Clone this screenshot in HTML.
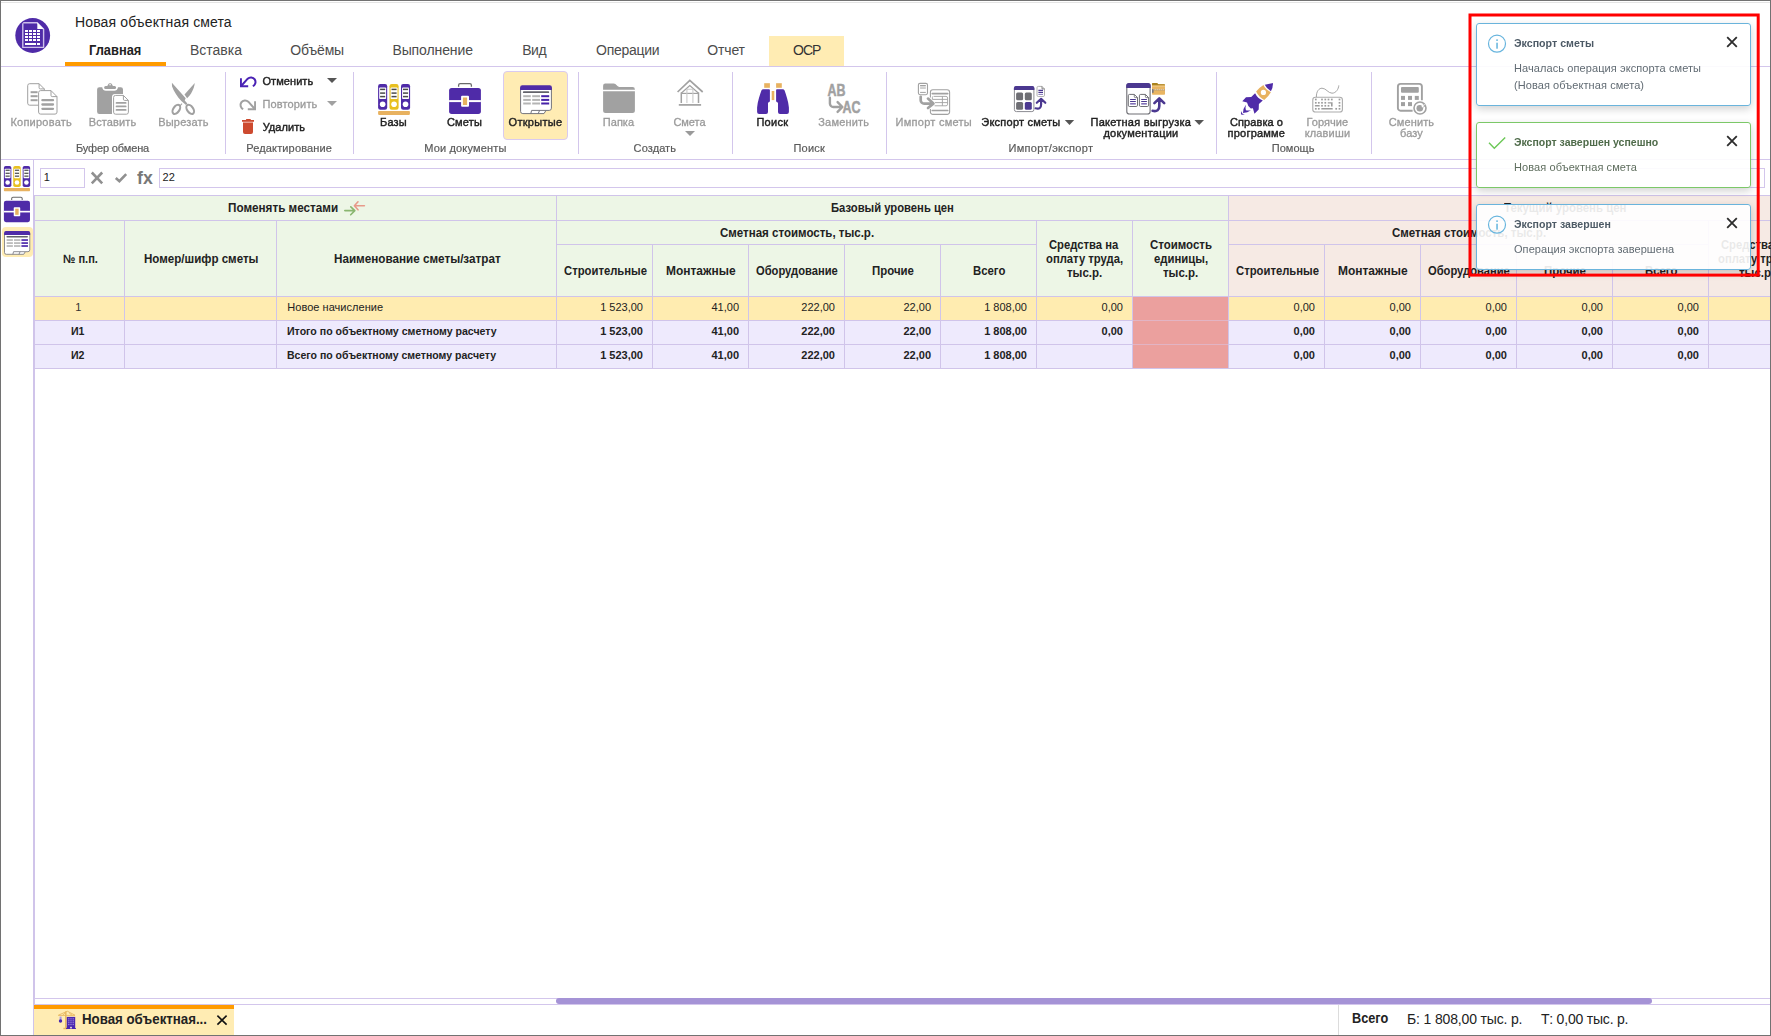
<!DOCTYPE html>
<html lang="ru"><head><meta charset="utf-8"><title>Новая объектная смета</title>
<style>
html,body{margin:0;padding:0;background:#fff;}
body{width:1771px;height:1036px;position:relative;overflow:hidden;font-family:'Liberation Sans', sans-serif;}
.b{position:absolute;}
.t{position:absolute;white-space:pre;line-height:1;}
svg{position:absolute;overflow:visible;}
#toasts,#rib{position:absolute;left:0;top:0;width:1771px;height:1036px;will-change:transform;}
</style></head>
<body>
<div id="main">
<div class="b" style="left:0px;top:0px;width:1771px;height:1px;background:#727272;"></div>
<div class="b" style="left:0px;top:0px;width:1px;height:1036px;background:#727272;"></div>
<div class="b" style="left:1770px;top:0px;width:1px;height:1036px;background:#727272;"></div>
<div class="b" style="left:0px;top:1035px;width:1771px;height:1px;background:#727272;"></div>
<div class="b" style="left:1px;top:2px;width:1769px;height:1px;background:#e4e4e4;"></div>
<div class="b" style="left:65px;top:62px;width:101px;height:4px;background:#ff9b00;"></div>
<div class="b" style="left:769px;top:36px;width:75px;height:30px;background:#ffecb3;"></div>
<div class="b" style="left:1px;top:66px;width:1769px;height:1px;background:#d3c6ec;"></div>
<div class="b" style="left:1px;top:159px;width:1769px;height:1px;background:#d3c6ec;"></div>
<div class="b" style="left:225px;top:72px;width:1px;height:82px;background:#d3c6ec;"></div>
<div class="b" style="left:353px;top:72px;width:1px;height:82px;background:#d3c6ec;"></div>
<div class="b" style="left:578px;top:72px;width:1px;height:82px;background:#d3c6ec;"></div>
<div class="b" style="left:732px;top:72px;width:1px;height:82px;background:#d3c6ec;"></div>
<div class="b" style="left:886px;top:72px;width:1px;height:82px;background:#d3c6ec;"></div>
<div class="b" style="left:1216px;top:72px;width:1px;height:82px;background:#d3c6ec;"></div>
<div class="b" style="left:1371px;top:72px;width:1px;height:82px;background:#d3c6ec;"></div>
<div class="b" style="left:503px;top:71px;width:63px;height:67px;background:#ffecb3;border:1px solid #d9caf0;border-radius:4px;"></div>
<div class="b" style="left:40px;top:168px;width:45px;height:20px;background:#fff;border:1px solid #d3c6ec;box-sizing:border-box;"></div>
<div class="b" style="left:159px;top:168px;width:1606px;height:20px;background:#fff;border:1px solid #d3c6ec;box-sizing:border-box;"></div>
<div class="b" style="left:2px;top:227px;width:30.5px;height:30px;background:#ffecb3;border-radius:4px;"></div>
<div class="b" style="left:34px;top:195px;width:1195px;height:102px;background:#edf6e6;"></div>
<div class="b" style="left:1229px;top:195px;width:541px;height:102px;background:#f6eae4;"></div>
<div class="b" style="left:34px;top:297px;width:1736px;height:23px;background:#ffecb0;"></div>
<div class="b" style="left:34px;top:321px;width:1736px;height:47px;background:#eeeafd;"></div>
<div class="b" style="left:1133px;top:297px;width:95px;height:71px;background:#eba09e;"></div>
<div class="b" style="left:34px;top:195px;width:1736px;height:1px;background:#d0c4ea;"></div>
<div class="b" style="left:34px;top:220px;width:1736px;height:1px;background:#d0c4ea;"></div>
<div class="b" style="left:556px;top:244px;width:480px;height:1px;background:#d0c4ea;"></div>
<div class="b" style="left:1228px;top:244px;width:480px;height:1px;background:#d0c4ea;"></div>
<div class="b" style="left:34px;top:296px;width:1736px;height:1px;background:#d0c4ea;"></div>
<div class="b" style="left:34px;top:320px;width:1736px;height:1px;background:#d0c4ea;"></div>
<div class="b" style="left:34px;top:344px;width:1736px;height:1px;background:#d0c4ea;"></div>
<div class="b" style="left:34px;top:368px;width:1736px;height:1px;background:#d0c4ea;"></div>
<div class="b" style="left:33px;top:160px;width:1px;height:875px;background:#d0c4ea;"></div>
<div class="b" style="left:34px;top:195px;width:1px;height:840px;background:#d0c4ea;"></div>
<div class="b" style="left:124px;top:220px;width:1px;height:149px;background:#d0c4ea;"></div>
<div class="b" style="left:276px;top:220px;width:1px;height:149px;background:#d0c4ea;"></div>
<div class="b" style="left:556px;top:195px;width:1px;height:174px;background:#d0c4ea;"></div>
<div class="b" style="left:1228px;top:195px;width:1px;height:174px;background:#d0c4ea;"></div>
<div class="b" style="left:652px;top:244px;width:1px;height:125px;background:#d0c4ea;"></div>
<div class="b" style="left:748px;top:244px;width:1px;height:125px;background:#d0c4ea;"></div>
<div class="b" style="left:844px;top:244px;width:1px;height:125px;background:#d0c4ea;"></div>
<div class="b" style="left:940px;top:244px;width:1px;height:125px;background:#d0c4ea;"></div>
<div class="b" style="left:1324px;top:244px;width:1px;height:125px;background:#d0c4ea;"></div>
<div class="b" style="left:1420px;top:244px;width:1px;height:125px;background:#d0c4ea;"></div>
<div class="b" style="left:1516px;top:244px;width:1px;height:125px;background:#d0c4ea;"></div>
<div class="b" style="left:1612px;top:244px;width:1px;height:125px;background:#d0c4ea;"></div>
<div class="b" style="left:1036px;top:220px;width:1px;height:149px;background:#d0c4ea;"></div>
<div class="b" style="left:1132px;top:220px;width:1px;height:149px;background:#d0c4ea;"></div>
<div class="b" style="left:1708px;top:220px;width:1px;height:149px;background:#d0c4ea;"></div>
<div class="b" style="left:1133px;top:320px;width:95px;height:1px;background:#e2b4c4;"></div>
<div class="b" style="left:1133px;top:344px;width:95px;height:1px;background:#e2b4c4;"></div>
<div class="b" style="left:34px;top:998px;width:1736px;height:1px;background:#d3c6ec;"></div>
<div class="b" style="left:34px;top:1004px;width:1736px;height:1px;background:#d3c6ec;"></div>
<div class="b" style="left:556px;top:998px;width:1096px;height:6px;background:#a593d6;border-radius:3px;"></div>
<div class="b" style="left:34px;top:1005px;width:200px;height:4px;background:#ff9b00;"></div>
<div class="b" style="left:34px;top:1009px;width:200px;height:26px;background:#ffecb3;"></div>
<div class="b" style="left:1338px;top:1005px;width:1px;height:30px;background:#dcdcdc;"></div>
<span class="t" style="left:75.00px;top:15.15px;font-size:14px;font-weight:400;color:#222;letter-spacing:0.134px;">Новая объектная смета</span>
<span class="t" style="left:89.20px;top:43.15px;font-size:14px;font-weight:700;color:#222;transform:scaleX(0.9186);transform-origin:0 0;">Главная</span>
<span class="t" style="left:190.00px;top:43.15px;font-size:14px;font-weight:400;color:#4c4c4c;letter-spacing:-0.007px;">Вставка</span>
<span class="t" style="left:290.30px;top:43.15px;font-size:14px;font-weight:400;color:#4c4c4c;letter-spacing:-0.162px;">Объёмы</span>
<span class="t" style="left:392.40px;top:43.15px;font-size:14px;font-weight:400;color:#4c4c4c;letter-spacing:-0.098px;">Выполнение</span>
<span class="t" style="left:522.20px;top:43.15px;font-size:14px;font-weight:400;color:#4c4c4c;letter-spacing:-0.409px;">Вид</span>
<span class="t" style="left:596.00px;top:43.15px;font-size:14px;font-weight:400;color:#4c4c4c;letter-spacing:-0.263px;">Операции</span>
<span class="t" style="left:707.30px;top:43.15px;font-size:14px;font-weight:400;color:#4c4c4c;letter-spacing:-0.169px;">Отчет</span>
<span class="t" style="left:793.00px;top:43.15px;font-size:14px;font-weight:400;color:#333;letter-spacing:-0.981px;">ОСР</span>
<span class="t" style="left:43.70px;top:171.69px;font-size:11px;font-weight:400;color:#222;">1</span>
<span class="t" style="left:137.10px;top:168.76px;font-size:18px;font-weight:700;color:#787878;transform:scaleX(0.9865);transform-origin:0 0;">fx</span>
<span class="t" style="left:162.60px;top:171.69px;font-size:11px;font-weight:400;color:#222;">22</span>
<span class="t" style="left:227.60px;top:201.84px;font-size:12px;font-weight:700;color:#222;transform:scaleX(0.9738);transform-origin:0 0;">Поменять местами</span>
<span class="t" style="left:62.70px;top:252.84px;font-size:12px;font-weight:700;color:#222;transform:scaleX(0.9215);transform-origin:0 0;">№ п.п.</span>
<span class="t" style="left:143.60px;top:252.84px;font-size:12px;font-weight:700;color:#222;transform:scaleX(0.9638);transform-origin:0 0;">Номер/шифр сметы</span>
<span class="t" style="left:333.70px;top:252.84px;font-size:12px;font-weight:700;color:#222;transform:scaleX(0.9735);transform-origin:0 0;">Наименование сметы/затрат</span>
<span class="t" style="left:831.40px;top:201.84px;font-size:12px;font-weight:700;color:#222;transform:scaleX(0.9374);transform-origin:0 0;">Базовый уровень цен</span>
<span class="t" style="left:720.00px;top:226.84px;font-size:12px;font-weight:700;color:#222;transform:scaleX(0.9597);transform-origin:0 0;">Сметная стоимость, тыс.р.</span>
<span class="t" style="left:563.80px;top:264.84px;font-size:12px;font-weight:700;color:#222;transform:scaleX(0.9398);transform-origin:0 0;">Строительные</span>
<span class="t" style="left:1235.80px;top:264.84px;font-size:12px;font-weight:700;color:#222;transform:scaleX(0.9398);transform-origin:0 0;">Строительные</span>
<span class="t" style="left:666.20px;top:264.84px;font-size:12px;font-weight:700;color:#222;transform:scaleX(0.9970);transform-origin:0 0;">Монтажные</span>
<span class="t" style="left:1338.20px;top:264.84px;font-size:12px;font-weight:700;color:#222;transform:scaleX(0.9970);transform-origin:0 0;">Монтажные</span>
<span class="t" style="left:755.90px;top:264.84px;font-size:12px;font-weight:700;color:#222;transform:scaleX(0.9320);transform-origin:0 0;">Оборудование</span>
<span class="t" style="left:1427.90px;top:264.84px;font-size:12px;font-weight:700;color:#222;transform:scaleX(0.9320);transform-origin:0 0;">Оборудование</span>
<span class="t" style="left:872.10px;top:264.84px;font-size:12px;font-weight:700;color:#222;transform:scaleX(0.9519);transform-origin:0 0;">Прочие</span>
<span class="t" style="left:1544.10px;top:264.84px;font-size:12px;font-weight:700;color:#222;transform:scaleX(0.9519);transform-origin:0 0;">Прочие</span>
<span class="t" style="left:972.90px;top:264.84px;font-size:12px;font-weight:700;color:#222;transform:scaleX(0.9477);transform-origin:0 0;">Всего</span>
<span class="t" style="left:1644.90px;top:264.84px;font-size:12px;font-weight:700;color:#222;transform:scaleX(0.9477);transform-origin:0 0;">Всего</span>
<span class="t" style="left:1049.20px;top:239.34px;font-size:12px;font-weight:700;color:#222;transform:scaleX(0.9373);transform-origin:0 0;">Средства на</span>
<span class="t" style="left:1046.00px;top:253.34px;font-size:12px;font-weight:700;color:#222;transform:scaleX(0.9390);transform-origin:0 0;">оплату труда,</span>
<span class="t" style="left:1067.00px;top:267.34px;font-size:12px;font-weight:700;color:#222;transform:scaleX(0.9566);transform-origin:0 0;">тыс.р.</span>
<span class="t" style="left:1150.00px;top:239.34px;font-size:12px;font-weight:700;color:#222;transform:scaleX(0.9550);transform-origin:0 0;">Стоимость</span>
<span class="t" style="left:1154.00px;top:253.34px;font-size:12px;font-weight:700;color:#222;transform:scaleX(0.9447);transform-origin:0 0;">единицы,</span>
<span class="t" style="left:1163.00px;top:267.34px;font-size:12px;font-weight:700;color:#222;transform:scaleX(0.9566);transform-origin:0 0;">тыс.р.</span>
<span class="t" style="left:1503.70px;top:201.84px;font-size:12px;font-weight:700;color:#222;transform:scaleX(0.9524);transform-origin:0 0;">Текущий уровень цен</span>
<span class="t" style="left:1392.00px;top:226.84px;font-size:12px;font-weight:700;color:#222;transform:scaleX(0.9597);transform-origin:0 0;">Сметная стоимость, тыс.р.</span>
<span class="t" style="left:1721.20px;top:239.34px;font-size:12px;font-weight:700;color:#222;transform:scaleX(0.9373);transform-origin:0 0;">Средства на</span>
<span class="t" style="left:1718.00px;top:253.34px;font-size:12px;font-weight:700;color:#222;transform:scaleX(0.9390);transform-origin:0 0;">оплату труда,</span>
<span class="t" style="left:1739.00px;top:267.34px;font-size:12px;font-weight:700;color:#222;transform:scaleX(0.9566);transform-origin:0 0;">тыс.р.</span>
<span class="t" style="left:75.20px;top:301.69px;font-size:11px;font-weight:400;color:#333;">1</span>
<span class="t" style="left:287.30px;top:301.69px;font-size:11px;font-weight:400;color:#222;letter-spacing:0.032px;">Новое начисление</span>
<span class="t" style="left:70.50px;top:325.69px;font-size:11px;font-weight:700;color:#222;transform:scaleX(0.9621);transform-origin:0 0;">И1</span>
<span class="t" style="left:70.50px;top:349.69px;font-size:11px;font-weight:700;color:#222;transform:scaleX(0.9621);transform-origin:0 0;">И2</span>
<span class="t" style="left:287.30px;top:325.69px;font-size:11px;font-weight:700;color:#222;transform:scaleX(0.9615);transform-origin:0 0;">Итого по объектному сметному расчету</span>
<span class="t" style="left:287.30px;top:349.69px;font-size:11px;font-weight:700;color:#222;transform:scaleX(0.9569);transform-origin:0 0;">Всего по объектному сметному расчету</span>
<span class="t" style="left:600.17px;top:301.69px;font-size:11px;font-weight:400;color:#222;">1 523,00</span>
<span class="t" style="left:600.17px;top:325.69px;font-size:11px;font-weight:700;color:#222;">1 523,00</span>
<span class="t" style="left:600.17px;top:349.69px;font-size:11px;font-weight:700;color:#222;">1 523,00</span>
<span class="t" style="left:711.47px;top:301.69px;font-size:11px;font-weight:400;color:#222;">41,00</span>
<span class="t" style="left:711.47px;top:325.69px;font-size:11px;font-weight:700;color:#222;">41,00</span>
<span class="t" style="left:711.47px;top:349.69px;font-size:11px;font-weight:700;color:#222;">41,00</span>
<span class="t" style="left:801.34px;top:301.69px;font-size:11px;font-weight:400;color:#222;">222,00</span>
<span class="t" style="left:801.34px;top:325.69px;font-size:11px;font-weight:700;color:#222;">222,00</span>
<span class="t" style="left:801.34px;top:349.69px;font-size:11px;font-weight:700;color:#222;">222,00</span>
<span class="t" style="left:903.47px;top:301.69px;font-size:11px;font-weight:400;color:#222;">22,00</span>
<span class="t" style="left:903.47px;top:325.69px;font-size:11px;font-weight:700;color:#222;">22,00</span>
<span class="t" style="left:903.47px;top:349.69px;font-size:11px;font-weight:700;color:#222;">22,00</span>
<span class="t" style="left:984.17px;top:301.69px;font-size:11px;font-weight:400;color:#222;">1 808,00</span>
<span class="t" style="left:984.17px;top:325.69px;font-size:11px;font-weight:700;color:#222;">1 808,00</span>
<span class="t" style="left:984.17px;top:349.69px;font-size:11px;font-weight:700;color:#222;">1 808,00</span>
<span class="t" style="left:1101.58px;top:301.69px;font-size:11px;font-weight:400;color:#222;">0,00</span>
<span class="t" style="left:1101.58px;top:325.69px;font-size:11px;font-weight:700;color:#222;">0,00</span>
<span class="t" style="left:1293.58px;top:301.69px;font-size:11px;font-weight:400;color:#222;">0,00</span>
<span class="t" style="left:1293.58px;top:325.69px;font-size:11px;font-weight:700;color:#222;">0,00</span>
<span class="t" style="left:1293.58px;top:349.69px;font-size:11px;font-weight:700;color:#222;">0,00</span>
<span class="t" style="left:1389.58px;top:301.69px;font-size:11px;font-weight:400;color:#222;">0,00</span>
<span class="t" style="left:1389.58px;top:325.69px;font-size:11px;font-weight:700;color:#222;">0,00</span>
<span class="t" style="left:1389.58px;top:349.69px;font-size:11px;font-weight:700;color:#222;">0,00</span>
<span class="t" style="left:1485.58px;top:301.69px;font-size:11px;font-weight:400;color:#222;">0,00</span>
<span class="t" style="left:1485.58px;top:325.69px;font-size:11px;font-weight:700;color:#222;">0,00</span>
<span class="t" style="left:1485.58px;top:349.69px;font-size:11px;font-weight:700;color:#222;">0,00</span>
<span class="t" style="left:1581.58px;top:301.69px;font-size:11px;font-weight:400;color:#222;">0,00</span>
<span class="t" style="left:1581.58px;top:325.69px;font-size:11px;font-weight:700;color:#222;">0,00</span>
<span class="t" style="left:1581.58px;top:349.69px;font-size:11px;font-weight:700;color:#222;">0,00</span>
<span class="t" style="left:1677.58px;top:301.69px;font-size:11px;font-weight:400;color:#222;">0,00</span>
<span class="t" style="left:1677.58px;top:325.69px;font-size:11px;font-weight:700;color:#222;">0,00</span>
<span class="t" style="left:1677.58px;top:349.69px;font-size:11px;font-weight:700;color:#222;">0,00</span>
<span class="t" style="left:82.30px;top:1012.15px;font-size:14px;font-weight:700;color:#222;transform:scaleX(0.9478);transform-origin:0 0;">Новая объектная...</span>
<span class="t" style="left:1351.60px;top:1011.15px;font-size:14px;font-weight:700;color:#222;transform:scaleX(0.9075);transform-origin:0 0;">Всего</span>
<span class="t" style="left:1407.10px;top:1011.65px;font-size:14px;font-weight:400;color:#222;letter-spacing:-0.163px;">Б: 1 808,00 тыс. р.</span>
<span class="t" style="left:1540.90px;top:1011.65px;font-size:14px;font-weight:400;color:#222;letter-spacing:-0.200px;">Т: 0,00 тыс. р.</span>
<svg width="1771" height="1036" viewBox="0 0 1771 1036" style="left:0;top:0"><g>
<circle cx="32.7" cy="35.5" r="17.4" fill="#4f2ba8"/>
<path d="M23.2,22.8 H37.2 L43.6,29.2 V47.4 H22.8 V23.2" fill="none" stroke="#cdbfea" stroke-width="1.4" stroke-linejoin="round"/>
<path d="M37.3,22.6 V29 H43.7 Z" fill="#fff"/>
<g fill="#fff"><rect x="25" y="30" width="3" height="2"/><rect x="29" y="30" width="3" height="2"/><rect x="33" y="30" width="3" height="2"/><rect x="37" y="30" width="3" height="2"/><rect x="25" y="33" width="3" height="2"/><rect x="29" y="33" width="3" height="2"/><rect x="33" y="33" width="3" height="2"/><rect x="37" y="33" width="3" height="2"/><rect x="25" y="36" width="3" height="2"/><rect x="29" y="36" width="3" height="2"/><rect x="33" y="36" width="3" height="2"/><rect x="37" y="36" width="3" height="2"/><rect x="25" y="39" width="3" height="2"/><rect x="29" y="39" width="3" height="2"/><rect x="33" y="39" width="3" height="2"/><rect x="37" y="39" width="3" height="2"/><rect x="25" y="43" width="11" height="2"/><rect x="37" y="43" width="3" height="2"/></g></g>
<g><path d="M29.7,83.7 H39.099999999999994 L44.3,88.9 V103.2 a2,2 0 0 1 -2,2 H29.7 a2,2 0 0 1 -2,-2 V85.7 a2,2 0 0 1 2,-2 Z" fill="#fff" stroke="#a1a1a1" stroke-width="1"/><path d="M39.099999999999994,83.7 V87.7 a1.2,1.2 0 0 0 1.2,1.2 H44.3" fill="none" stroke="#a1a1a1" stroke-width="1"/><line x1="30.6" x2="37.6" y1="92.2" y2="92.2" stroke="#a1a1a1" stroke-width="2"/><line x1="30.6" x2="37.6" y1="96.2" y2="96.2" stroke="#a1a1a1" stroke-width="2"/><line x1="30.6" x2="37.6" y1="100.2" y2="100.2" stroke="#a1a1a1" stroke-width="2"/><path d="M40.6,90.6 H51 L57,96.6 V112.1 a2,2 0 0 1 -2,2 H40.6 a2,2 0 0 1 -2,-2 V92.6 a2,2 0 0 1 2,-2 Z" fill="#fff" stroke="#a1a1a1" stroke-width="1"/><path d="M51,90.6 V95.39999999999999 a1.2,1.2 0 0 0 1.2,1.2 H57" fill="none" stroke="#a1a1a1" stroke-width="1"/><line x1="42.4" x2="53" y1="100.2" y2="100.2" stroke="#a1a1a1" stroke-width="2.3" stroke-linecap="round"/><line x1="42.4" x2="53" y1="104.5" y2="104.5" stroke="#a1a1a1" stroke-width="2.3" stroke-linecap="round"/><line x1="42.4" x2="53" y1="108.8" y2="108.8" stroke="#a1a1a1" stroke-width="2.3" stroke-linecap="round"/></g>
<g>
<path d="M99.3,87.2 H102.2 C102.6,89.6 104,90.7 106,90.7 H114.2 C116.2,90.7 117.6,89.6 118,87.2 H120.8 a2.2,2.2 0 0 1 2.2,2.2 V94 H115 a3,3 0 0 0 -3,3 V113.9 H99.3 a2.2,2.2 0 0 1 -2.2,-2.2 V89.4 a2.2,2.2 0 0 1 2.2,-2.2 Z" fill="#a1a1a1"/>
<path d="M105.6,86 H107.3 L108.4,83.9 a1.6,1.6 0 0 1 1.2,-0.7 h1 a1.6,1.6 0 0 1 1.2,0.7 L112.9,86 H114.6 a1.5,1.5 0 0 1 0,3 H105.6 a1.5,1.5 0 0 1 0,-3 Z M109.3,84.3 h1.6 v0.9 h-1.6 Z" fill="#a1a1a1" fill-rule="evenodd"/>
<path d="M115.6,95.4 H123.4 L128.4,100.4 V112.2 a2,2 0 0 1 -2,2 H115.6 a2,2 0 0 1 -2,-2 V97.4 a2,2 0 0 1 2,-2 Z" fill="#fff" stroke="#a1a1a1" stroke-width="1"/><path d="M123.4,95.4 V99.2 a1.2,1.2 0 0 0 1.2,1.2 H128.4" fill="none" stroke="#a1a1a1" stroke-width="1"/><line x1="116.6" x2="125.6" y1="102.9" y2="102.9" stroke="#a1a1a1" stroke-width="1.9" stroke-linecap="round"/><line x1="116.6" x2="125.6" y1="106.4" y2="106.4" stroke="#a1a1a1" stroke-width="1.9" stroke-linecap="round"/><line x1="116.6" x2="125.6" y1="109.9" y2="109.9" stroke="#a1a1a1" stroke-width="1.9" stroke-linecap="round"/></g>
<g fill="#a1a1a1">
<path d="M171.9,82.8 L185.7,98.2 L184.7,100.6 L187.4,103.6 L186,105 L181.6,101.3 C177.2,96.6 173.6,91 172,86.2 Z"/>
<path d="M194.8,82.9 L184.5,94.6 L187.1,98.2 C191,94.6 194,89 194.8,82.9 Z"/>
<path d="M179.6,105.4 L181.6,103.2 L182.4,103.9 L180.4,106.2 Z"/>
<ellipse cx="176.35" cy="109.4" rx="5.1" ry="3.0" transform="rotate(-55 176.35 109.4)" fill="none" stroke="#a1a1a1" stroke-width="2.1"/>
<ellipse cx="190.2" cy="109.4" rx="5.1" ry="3.0" transform="rotate(55 190.2 109.4)" fill="none" stroke="#a1a1a1" stroke-width="2.1"/>
</g>
<g fill="none" stroke-width="2">
<path d="M240.95,78.3 V86.2 H248.2" stroke="#4a22b4" stroke-width="1.9"/>
<path d="M241.2,86 L247.7,78.7 A4.6,4.6 0 1 1 252.8,86.2" stroke="#4a22b4" stroke-width="2"/>
<path d="M255.05,101.3 V109.2 H247.8" stroke="#a1a1a1" stroke-width="1.9"/>
<path d="M254.8,109 L248.3,101.7 A4.6,4.6 0 1 0 243.2,109.2" stroke="#a1a1a1" stroke-width="2"/>
</g>
<rect x="243" y="121.5" width="10" height="1.4" fill="#eeb0a4"/><g fill="#cd4a2f">
<path d="M242,119.9 H245.8 L246.4,119 H250.4 L251,119.9 H254 V121.7 H242 Z"/>
<path d="M243,122.7 H253 V132 a2,2 0 0 1 -2,2 H245 a2,2 0 0 1 -2,-2 Z"/>
</g>
<path d="M327,78 h10 l-5,5 Z" fill="#555"/>
<path d="M327,101 h10 l-5,5 Z" fill="#a1a1a1"/>
<g><rect x="378.1" y="84.1" width="9.1" height="25.7" rx="2.2" fill="#4f2ba8"/><rect x="379.20000000000005" y="87.5" width="6.9" height="11.6" rx="0.8" fill="#fff"/><line x1="380.1" x2="385.20000000000005" y1="89.4" y2="89.4" stroke="#4a4a4a" stroke-width="1.5"/><line x1="380.1" x2="385.20000000000005" y1="93.1" y2="93.1" stroke="#4a4a4a" stroke-width="1.5"/><line x1="380.1" x2="385.20000000000005" y1="96.6" y2="96.6" stroke="#4a4a4a" stroke-width="1.5"/><circle cx="382.65000000000003" cy="104.3" r="2.8" fill="#fff"/><rect x="389.5" y="84.1" width="9.1" height="25.7" rx="2.2" fill="#e8c020"/><rect x="390.6" y="87.5" width="6.9" height="11.6" rx="0.8" fill="#fff"/><line x1="391.5" x2="396.6" y1="89.4" y2="89.4" stroke="#4a4a4a" stroke-width="1.5"/><line x1="391.5" x2="396.6" y1="93.1" y2="93.1" stroke="#4a4a4a" stroke-width="1.5"/><line x1="391.5" x2="396.6" y1="96.6" y2="96.6" stroke="#4a4a4a" stroke-width="1.5"/><circle cx="394.05" cy="104.3" r="2.8" fill="#fff"/><rect x="401" y="84.1" width="9.1" height="25.7" rx="2.2" fill="#4f2ba8"/><rect x="402.1" y="87.5" width="6.9" height="11.6" rx="0.8" fill="#fff"/><line x1="403" x2="408.1" y1="89.4" y2="89.4" stroke="#4a4a4a" stroke-width="1.5"/><line x1="403" x2="408.1" y1="93.1" y2="93.1" stroke="#4a4a4a" stroke-width="1.5"/><line x1="403" x2="408.1" y1="96.6" y2="96.6" stroke="#4a4a4a" stroke-width="1.5"/><circle cx="405.55" cy="104.3" r="2.8" fill="#fff"/><rect x="378.1" y="111" width="31.8" height="3.9" rx="0.8" fill="#e8b260"/></g>
<g transform="translate(-306.14,96.94) scale(0.82)"><rect x="378.1" y="84.1" width="9.1" height="25.7" rx="2.2" fill="#4f2ba8"/><rect x="379.20000000000005" y="87.5" width="6.9" height="11.6" rx="0.8" fill="#fff"/><line x1="380.1" x2="385.20000000000005" y1="89.4" y2="89.4" stroke="#4a4a4a" stroke-width="1.5"/><line x1="380.1" x2="385.20000000000005" y1="93.1" y2="93.1" stroke="#4a4a4a" stroke-width="1.5"/><line x1="380.1" x2="385.20000000000005" y1="96.6" y2="96.6" stroke="#4a4a4a" stroke-width="1.5"/><circle cx="382.65000000000003" cy="104.3" r="2.8" fill="#fff"/><rect x="389.5" y="84.1" width="9.1" height="25.7" rx="2.2" fill="#e8c020"/><rect x="390.6" y="87.5" width="6.9" height="11.6" rx="0.8" fill="#fff"/><line x1="391.5" x2="396.6" y1="89.4" y2="89.4" stroke="#4a4a4a" stroke-width="1.5"/><line x1="391.5" x2="396.6" y1="93.1" y2="93.1" stroke="#4a4a4a" stroke-width="1.5"/><line x1="391.5" x2="396.6" y1="96.6" y2="96.6" stroke="#4a4a4a" stroke-width="1.5"/><circle cx="394.05" cy="104.3" r="2.8" fill="#fff"/><rect x="401" y="84.1" width="9.1" height="25.7" rx="2.2" fill="#4f2ba8"/><rect x="402.1" y="87.5" width="6.9" height="11.6" rx="0.8" fill="#fff"/><line x1="403" x2="408.1" y1="89.4" y2="89.4" stroke="#4a4a4a" stroke-width="1.5"/><line x1="403" x2="408.1" y1="93.1" y2="93.1" stroke="#4a4a4a" stroke-width="1.5"/><line x1="403" x2="408.1" y1="96.6" y2="96.6" stroke="#4a4a4a" stroke-width="1.5"/><circle cx="405.55" cy="104.3" r="2.8" fill="#fff"/><rect x="378.1" y="111" width="31.8" height="3.9" rx="0.8" fill="#e8b260"/></g>
<g><path d="M458.6,86.8 V85.2 a1.6,1.6 0 0 1 1.6,-1.6 H469.8 a1.6,1.6 0 0 1 1.6,1.6 V86.8" fill="none" stroke="#6a6a6a" stroke-width="1.3"/>
<rect x="449.1" y="87.9" width="31.8" height="26" rx="2.6" fill="#4f2ba8"/>
<rect x="449.1" y="100.1" width="31.8" height="2" fill="#fff"/>
<rect x="461.1" y="95.8" width="7.9" height="11" rx="1" fill="#fff"/>
<rect x="462.9" y="97.5" width="4.2" height="7.5" fill="#e8b260"/></g>
<g transform="translate(-364.36,128.73) scale(0.82)"><path d="M458.6,86.8 V85.2 a1.6,1.6 0 0 1 1.6,-1.6 H469.8 a1.6,1.6 0 0 1 1.6,1.6 V86.8" fill="none" stroke="#6a6a6a" stroke-width="1.3"/>
<rect x="449.1" y="87.9" width="31.8" height="26" rx="2.6" fill="#4f2ba8"/>
<rect x="449.1" y="100.1" width="31.8" height="2" fill="#fff"/>
<rect x="461.1" y="95.8" width="7.9" height="11" rx="1" fill="#fff"/>
<rect x="462.9" y="97.5" width="4.2" height="7.5" fill="#e8b260"/></g>
<g><path d="M520.6,88 V111.4 a2.2,2.2 0 0 0 2.2,2.2 H544 L546,110.4 H549.2 a2.2,2.2 0 0 0 2.2,-2.2 V88 Z" fill="#fff" stroke="#74747c" stroke-width="1"/>
<path d="M520.1,90 V87.5 a2.2,2.2 0 0 1 2.2,-2.2 H549.7 a2.2,2.2 0 0 1 2.2,2.2 V90 Z" fill="#4f2ba8"/>
<path d="M530.8,113.6 L531.6,110.4 H546 M539.6,110.4 L538.2,113.6" fill="none" stroke="#74747c" stroke-width="1"/>
<line x1="523.8" x2="548.3" y1="92.2" y2="92.2" stroke="#62626a" stroke-width="1.8" stroke-linecap="round"/><line x1="523.2" x2="530.8" y1="96.2" y2="96.2" stroke="#b4b4b4" stroke-width="2"/><line x1="532.2" x2="540" y1="96.2" y2="96.2" stroke="#b4b4b4" stroke-width="2"/><line x1="541.2" x2="549.2" y1="96.2" y2="96.2" stroke="#4722a8" stroke-width="2"/><line x1="523.2" x2="530.8" y1="99.9" y2="99.9" stroke="#b4b4b4" stroke-width="2"/><line x1="532.2" x2="540" y1="99.9" y2="99.9" stroke="#b4b4b4" stroke-width="2"/><line x1="541.2" x2="549.2" y1="99.9" y2="99.9" stroke="#4722a8" stroke-width="2"/><line x1="523.2" x2="530.8" y1="103.5" y2="103.5" stroke="#b4b4b4" stroke-width="2"/><line x1="532.2" x2="540" y1="103.5" y2="103.5" stroke="#b4b4b4" stroke-width="2"/><line x1="541.2" x2="549.2" y1="103.5" y2="103.5" stroke="#4722a8" stroke-width="2"/></g>
<g transform="translate(-422.38,161.15) scale(0.82)"><path d="M520.6,88 V111.4 a2.2,2.2 0 0 0 2.2,2.2 H544 L546,110.4 H549.2 a2.2,2.2 0 0 0 2.2,-2.2 V88 Z" fill="#fff" stroke="#74747c" stroke-width="1"/>
<path d="M520.1,90 V87.5 a2.2,2.2 0 0 1 2.2,-2.2 H549.7 a2.2,2.2 0 0 1 2.2,2.2 V90 Z" fill="#4f2ba8"/>
<path d="M530.8,113.6 L531.6,110.4 H546 M539.6,110.4 L538.2,113.6" fill="none" stroke="#74747c" stroke-width="1"/>
<line x1="523.8" x2="548.3" y1="92.2" y2="92.2" stroke="#62626a" stroke-width="1.8" stroke-linecap="round"/><line x1="523.2" x2="530.8" y1="96.2" y2="96.2" stroke="#b4b4b4" stroke-width="2"/><line x1="532.2" x2="540" y1="96.2" y2="96.2" stroke="#b4b4b4" stroke-width="2"/><line x1="541.2" x2="549.2" y1="96.2" y2="96.2" stroke="#4722a8" stroke-width="2"/><line x1="523.2" x2="530.8" y1="99.9" y2="99.9" stroke="#b4b4b4" stroke-width="2"/><line x1="532.2" x2="540" y1="99.9" y2="99.9" stroke="#b4b4b4" stroke-width="2"/><line x1="541.2" x2="549.2" y1="99.9" y2="99.9" stroke="#4722a8" stroke-width="2"/><line x1="523.2" x2="530.8" y1="103.5" y2="103.5" stroke="#b4b4b4" stroke-width="2"/><line x1="532.2" x2="540" y1="103.5" y2="103.5" stroke="#b4b4b4" stroke-width="2"/><line x1="541.2" x2="549.2" y1="103.5" y2="103.5" stroke="#4722a8" stroke-width="2"/></g>
<g fill="#a1a1a1">
<path d="M603.1,89.8 V85.7 a2.2,2.2 0 0 1 2.2,-2.2 H613.6 C616.6,83.5 616.8,87.1 620.4,87.1 H632.5 a2.4,2.4 0 0 1 2.4,2.4 V89.8 Z"/>
<path d="M603.1,91.2 H634.9 V110.6 a2.5,2.5 0 0 1 -2.5,2.5 H605.6 a2.5,2.5 0 0 1 -2.5,-2.5 Z"/>
</g>
<g fill="none" stroke="#a1a1a1">
<path d="M677.6,92 L689.8,80.4 L702.7,92" stroke-width="1.7"/>
<path d="M681.2,93.2 L689.8,85.6 L698.6,93.2" stroke-width="1.2"/>
<path d="M681.3,92.6 V103 M698.5,92.6 V103" stroke-width="1.5"/>
<path d="M681.3,93.4 H698.5" stroke-width="1.2"/>
<path d="M686.9,88.8 V103 M692.9,88.8 V103 M686.9,89.2 H692.9" stroke="#cbcbcb" stroke-width="1.1"/>
<path d="M678.8,104.9 H701.1" stroke-width="1.7"/>
</g>
<path d="M685,131.1 h10 l-5,5 Z" fill="#9a9a9a"/>
<g>
<rect x="764.2" y="83.2" width="5.7" height="4.6" fill="#e8b260"/><rect x="776.1" y="83.2" width="5.7" height="4.6" fill="#e8b260"/>
<rect x="771.7" y="91" width="2.6" height="9.1" fill="#e8b260"/>
<path d="M763.6,89.2 H769 a0.9,0.9 0 0 1 0.9,0.9 V101 a1,1 0 0 1 -0.6,0.9 L768,102.8 V112.1 a2,2 0 0 1 -2,2 H759.1 a2,2 0 0 1 -2,-2 V107.6 C757.6,101 760,95 761.4,90.6 a2.2,2.2 0 0 1 2.2,-1.4 Z" fill="#4f2ba8"/>
<path d="M782.4,89.2 H777 a0.9,0.9 0 0 0 -0.9,0.9 V101 a1,1 0 0 0 0.6,0.9 L778,102.8 V112.1 a2,2 0 0 0 2,2 H786.9 a2,2 0 0 0 2,-2 V107.6 C788.4,101 786,95 784.6,90.6 a2.2,2.2 0 0 0 -2.2,-1.4 Z" fill="#4f2ba8"/>
</g>
<g fill="#a1a1a1" stroke="#a1a1a1" stroke-width="0.5" font-family="'Liberation Sans',sans-serif" font-weight="700" font-size="16.6">
<text x="827.6" y="95.9" textLength="18" lengthAdjust="spacingAndGlyphs">AB</text>
<text x="842.4" y="112.9" textLength="18" lengthAdjust="spacingAndGlyphs">AC</text>
<path d="M829.9,97.7 V103.6 a3.4,3.4 0 0 0 3.4,3.4 H841.6 M837.6,102.1 L842.4,107 L837.6,111.9" fill="none" stroke="#a1a1a1" stroke-width="2.4" stroke-linecap="round" stroke-linejoin="round"/>
</g>
<g fill="none" stroke="#a1a1a1">
<rect x="918.4" y="83.4" width="9.1" height="11.3" rx="1.6" stroke-width="1.1" fill="#fff"/>
<rect x="920.1" y="85.6" width="5.7" height="2.6" fill="#dcdcdc" stroke="none"/>
<path d="M920.1,85.5 H925.8 M920.1,92.4 H925.8" stroke-width="1"/>
<path d="M920.1,88.2 H925.8" stroke="#bdbdbd" stroke-width="1"/>
<path d="M930.4,97.4 V92.2 a2.5,2.5 0 0 1 2.5,-2.5 H947.1 a2.5,2.5 0 0 1 2.5,2.5 V111.9 a2.5,2.5 0 0 1 -2.5,2.5 H932.9 a2.5,2.5 0 0 1 -2.5,-2.5 V109" stroke-width="1.1"/>
<path d="M932.3,93.6 H947.7 M932.3,110.5 H947.7" stroke-width="1.7" stroke-linecap="round"/>
<path d="M934,96.4 H946 a1.6,1.6 0 0 1 1.6,1.6 V104.2 a1.6,1.6 0 0 1 -1.6,1.6 H934.6 M932.4,99.4 V97.4 a1,1 0 0 1 1,-1 M932.4,99.4 H947.6 M935,102.6 H947.6 M942.4,96.4 V105.8" stroke-width="0.9"/>
<path d="M920.7,96.8 V100.2 a3.4,3.4 0 0 0 3.4,3.4 H932.6 M928,98.6 L933.4,103.6 L928,108" stroke-width="2.7" stroke-linecap="round" stroke-linejoin="round"/>
</g>
<g>
<rect x="1014.4" y="86.6" width="19.5" height="25" rx="2" fill="#fff" stroke="#8c8c92" stroke-width="1"/>
<path d="M1013.9,89.9 V88.1 a2,2 0 0 1 2,-2 H1032.4 a2,2 0 0 1 2,2 V89.9 Z" fill="#4b3890"/>
<rect x="1016.1" y="92.4" width="7" height="7.9" rx="1.5" fill="#6e6e74"/><rect x="1024.8" y="92.4" width="7" height="7.9" rx="1.5" fill="#6e6e74"/>
<rect x="1016.1" y="102.1" width="7" height="7.7" rx="1.5" fill="#6e6e74"/><rect x="1024.8" y="102.1" width="7" height="7.7" rx="1.5" fill="#4b3890"/>
<path d="M1038.3,86.4 H1042 L1044.5,88.9 V95.2 a1.3,1.3 0 0 1 -1.3,1.3 H1038.3 a1.3,1.3 0 0 1 -1.3,-1.3 V87.7 a1.3,1.3 0 0 1 1.3,-1.3 Z" fill="#fff" stroke="#a8a8a8" stroke-width="0.9"/>
<path d="M1042,86.4 V88.9 H1044.5" fill="none" stroke="#777" stroke-width="0.9"/>
<path d="M1038.4,90.4 H1043 M1038.4,92.4 H1043" stroke="#4b3890" stroke-width="1.1"/><path d="M1038.4,94.4 H1043" stroke="#8f80c0" stroke-width="1.1"/>
<path d="M1035.6,108.3 C1039.5,109.6 1041.1,107.5 1041.1,104.5 V99.4 M1036.8,102.8 L1041.1,98.8 L1045.3,102.8" fill="none" stroke="#4b3890" stroke-width="2.2" stroke-linecap="round" stroke-linejoin="round"/>
</g>
<g>
<rect x="1126.8" y="83.7" width="23.3" height="30.3" rx="2.6" fill="#fff" stroke="#6e6e74" stroke-width="1.1"/>
<path d="M1126.2,87.9 V85.7 a2.6,2.6 0 0 1 2.6,-2.6 H1148.1 a2.6,2.6 0 0 1 2.6,2.6 V87.9 Z" fill="#4b3890"/>
<path d="M1129.6,94.4 H1134.3 L1137.5,97.6 V105.2 a1.3,1.3 0 0 1 -1.3,1.3 H1129.6 a1.3,1.3 0 0 1 -1.3,-1.3 V95.7 a1.3,1.3 0 0 1 1.3,-1.3 Z" fill="#fff" stroke="#6e6e74" stroke-width="1"/><path d="M1134.3,94.4 V96.6 a1,1 0 0 0 1,1 H1137.5" fill="none" stroke="#6e6e74" stroke-width="0.9"/><path d="M1130.1,99.5 H1135.8 M1130.1,101.5 H1135.8" stroke="#4b3890" stroke-width="1.2"/><path d="M1130.1,103.8 H1135.8" stroke="#8170b8" stroke-width="1.6"/><path d="M1140.7,94.4 H1145.4 L1148.6000000000001,97.6 V105.2 a1.3,1.3 0 0 1 -1.3,1.3 H1140.7 a1.3,1.3 0 0 1 -1.3,-1.3 V95.7 a1.3,1.3 0 0 1 1.3,-1.3 Z" fill="#fff" stroke="#6e6e74" stroke-width="1"/><path d="M1145.4,94.4 V96.6 a1,1 0 0 0 1,1 H1148.6000000000001" fill="none" stroke="#6e6e74" stroke-width="0.9"/><path d="M1141.2,99.5 H1146.9 M1141.2,101.5 H1146.9" stroke="#4b3890" stroke-width="1.2"/><path d="M1141.2,103.8 H1146.9" stroke="#8170b8" stroke-width="1.6"/>
<path d="M1152,83.9 a0.8,0.8 0 0 1 0.8,-0.8 H1157 L1158.4,84.3 H1164.2 a0.8,0.8 0 0 1 0.8,0.8 V94 a0.8,0.8 0 0 1 -0.8,0.8 H1152.8 a0.8,0.8 0 0 1 -0.8,-0.8 Z" fill="#e9b562"/>
<path d="M1152,85.6 V83.9 a0.8,0.8 0 0 1 0.8,-0.8 H1157 L1158.4,84.3 H1164.2 a0.8,0.8 0 0 1 0.8,0.8 V85.6 Z" fill="#a8821f"/>
<rect x="1152" y="85.6" width="13" height="1" fill="#f2cc8a"/>
<path d="M1152.4,90 H1165" stroke="#8e8e96" stroke-width="1.1" stroke-dasharray="1 1"/>
<path d="M1153.4,89.4 H1164" stroke="#f4f4f4" stroke-width="0.7" stroke-dasharray="0.8 1.2"/>
<rect x="1152" y="89.2" width="1.6" height="3.6" fill="#76767e"/>
<path d="M1152.6,110.8 C1157,112 1159.3,109.8 1159.3,106 V99 M1154.4,103.2 L1159.3,98.3 L1164.2,103.2" fill="none" stroke="#4b3890" stroke-width="2.6" stroke-linecap="round" stroke-linejoin="round"/>
</g>
<path d="M1064.8,120 h9.4 l-4.7,5 Z" fill="#555"/><path d="M1194.4,120 h9.6 l-4.8,5 Z" fill="#555"/>
<g>
<path d="M1264.8,84.7 L1272.9,83.1 Q1273.2,87.4 1270.9,91.2 Q1266.8,88.8 1264.8,84.7 Z" fill="#4f2ba8"/>
<path d="M1263.4,85.1 Q1265.8,90 1270.9,92.2 Q1268.4,96.8 1264.2,99.9 Q1259.4,98 1256.1,91.6 Q1259.4,87.6 1263.4,85.1 Z" fill="#e8b260"/>
<circle cx="1263.4" cy="92.4" r="2.6" fill="#fff"/>
<path d="M1255.1,93.2 Q1257.6,98.4 1262.8,100.4 L1258.9,104 L1258.7,109.6 L1254.5,113.7 L1252.9,108.2 L1250.8,108.6 Q1247.8,106.6 1247,102.6 L1242.3,101.3 L1246,97.3 L1251.2,97.1 Z" fill="#4f2ba8"/>
<path d="M1245.8,104.8 Q1242.8,109 1243,112.9 Q1247.6,112.8 1251,110.2 Q1248,110.9 1245.9,110.2 Q1245.2,108 1245.8,104.8 Z" fill="#4f2ba8"/>
<path d="M1241.4,111.1 Q1240.6,113.2 1241.1,114.5 Q1243,114.9 1244.8,114.3 Q1243.2,114 1242.2,113.5 Q1241.6,112.4 1241.4,111.1 Z" fill="#4f2ba8"/>
</g>
<g><rect x="1312.8" y="97.2" width="29.6" height="14.8" rx="2.6" fill="#fff" stroke="#ababab" stroke-width="1.1"/><path d="M1316.4,97 C1316.2,91.4 1319,88.2 1322,88.2 C1326,88.2 1328.2,93.2 1332,93.2 C1336,93.2 1338.6,89 1338.8,85.4" fill="none" stroke="#9c9c9c" stroke-width="0.9"/><rect x="1314.95" y="98.65" width="1.7" height="1.7" fill="#9c9c9c"/><rect x="1321.15" y="98.65" width="1.7" height="1.7" fill="#9c9c9c"/><rect x="1324.45" y="98.65" width="1.7" height="1.7" fill="#9c9c9c"/><rect x="1327.65" y="98.65" width="1.7" height="1.7" fill="#9c9c9c"/><rect x="1330.95" y="98.65" width="1.7" height="1.7" fill="#9c9c9c"/><rect x="1338.65" y="98.65" width="1.7" height="1.7" fill="#9c9c9c"/><rect x="1314.95" y="101.95" width="1.7" height="1.7" fill="#9c9c9c"/><rect x="1317.95" y="101.95" width="1.7" height="1.7" fill="#9c9c9c"/><rect x="1321.15" y="101.95" width="1.7" height="1.7" fill="#9c9c9c"/><rect x="1324.45" y="101.95" width="1.7" height="1.7" fill="#9c9c9c"/><rect x="1338.65" y="101.95" width="1.7" height="1.7" fill="#9c9c9c"/><rect x="1321.15" y="104.95" width="1.7" height="1.7" fill="#9c9c9c"/><rect x="1324.45" y="104.95" width="1.7" height="1.7" fill="#9c9c9c"/><rect x="1327.65" y="104.95" width="1.7" height="1.7" fill="#9c9c9c"/><rect x="1338.65" y="104.95" width="1.7" height="1.7" fill="#9c9c9c"/><rect x="1314.95" y="107.95" width="1.7" height="1.7" fill="#9c9c9c"/><rect x="1317.95" y="107.95" width="1.7" height="1.7" fill="#9c9c9c"/><rect x="1335.3500000000001" y="107.95" width="1.7" height="1.7" fill="#9c9c9c"/><rect x="1338.65" y="107.95" width="1.7" height="1.7" fill="#9c9c9c"/><path d="M1327.8,102.2 H1332.6 V106.6 H1331 V103.6 H1327.8 Z" fill="#9c9c9c"/><rect x="1314.8" y="105.1" width="5" height="1.5" rx="0.7" fill="#9c9c9c"/><rect x="1321.2" y="108" width="11.6" height="1.6" rx="0.7" fill="#9c9c9c"/></g>
<g>
<path d="M1421.9,100.2 V86.6 a2.7,2.7 0 0 0 -2.7,-2.7 H1400.6 a2.7,2.7 0 0 0 -2.7,2.7 V108 a2.7,2.7 0 0 0 2.7,2.7 H1412.6" fill="none" stroke="#a1a1a1" stroke-width="1.9"/>
<rect x="1401" y="87.1" width="17.8" height="5.7" rx="1" fill="#a1a1a1"/>
<g fill="#a1a1a1"><rect x="1401" y="95.9" width="4" height="4"/><rect x="1408" y="95.9" width="4" height="4"/><rect x="1414.8" y="95.9" width="4" height="4"/>
<rect x="1401" y="102.1" width="4" height="4"/><rect x="1408" y="102.1" width="4" height="4"/></g>
<circle cx="1420" cy="108" r="6" fill="#fff" stroke="#a1a1a1" stroke-width="1.6"/>
<circle cx="1419.8" cy="108.2" r="3.3" fill="#a1a1a1"/>
<path d="M1421.6,104.2 L1425.4,104.6 L1424.2,107.6 L1421.8,107.2 Z" fill="#fff"/>
<path d="M1422.8,104.2 L1425,106 L1423.2,107.2" fill="none" stroke="#a1a1a1" stroke-width="0.9"/>
</g>
<g fill="none" stroke="#909090" stroke-width="2.6">
<path d="M91.8,172.5 L102.2,183.3 M102.2,172.5 L91.8,183.3"/>
<path d="M115.8,178 L119.4,181.2 L126.2,174.2"/>
</g>
<g fill="none" stroke-width="1.6" stroke-linecap="round" stroke-linejoin="round">
<path d="M344.8,210.6 H354.6 M350.8,206.8 L354.8,210.6 L350.7,214.8" stroke="#8ab670"/>
<path d="M364.4,205.8 H354.8 M358,201.8 L354.4,205.8 L358,209.8" stroke="#e89a8a"/>
</g>
<g>
<path d="M58.2,1015.4 H75 M58.4,1015.2 L67.3,1011.2 L75,1015.2 M62.6,1015.2 L65.2,1013 M72,1015.2 L69.2,1013" fill="none" stroke="#e6b860" stroke-width="0.9"/>
<path d="M65.8,1011.4 V1028.6 M63.4,1028.6 H66.4 L65.8,1026" fill="none" stroke="#e6b860" stroke-width="1.5"/>
<rect x="59.6" y="1016.6" width="2" height="3.6" fill="#a99be0"/>
<circle cx="60.5" cy="1021" r="1.7" fill="#4a28b0"/>
<rect x="66.8" y="1016.9" width="8.4" height="12" fill="#4a28b0"/>
<rect x="66.1" y="1028" width="9.8" height="1" fill="#4a28b0"/>
<g fill="#b9a8e8"><rect x="68.2" y="1018.4" width="1.2" height="0.9"/><rect x="70.4" y="1018.4" width="1.2" height="0.9"/><rect x="72.6" y="1018.4" width="1.2" height="0.9"/><rect x="68.2" y="1020.4" width="1.2" height="0.9"/><rect x="70.4" y="1020.4" width="1.2" height="0.9"/><rect x="72.6" y="1020.4" width="1.2" height="0.9"/><rect x="68.2" y="1022.3" width="1.2" height="0.9"/><rect x="70.4" y="1022.3" width="1.2" height="0.9"/><rect x="72.6" y="1022.3" width="1.2" height="0.9"/><rect x="68.2" y="1024.2" width="1.2" height="0.9"/><rect x="70.4" y="1024.2" width="1.2" height="0.9"/><rect x="72.6" y="1024.2" width="1.2" height="0.9"/></g>
<rect x="70.2" y="1026.8" width="1.6" height="1.6" fill="#fff6d8"/>
<path d="M217.4,1015.6 L226.6,1024.6 M226.6,1015.6 L217.4,1024.6" stroke="#111" stroke-width="1.6" fill="none"/>
</g></svg>
<div id="rib">
<span class="t" style="left:10.40px;top:116.69px;font-size:11px;font-weight:400;color:#9a9a9a;-webkit-text-stroke:0.3px #9a9a9a;letter-spacing:0.247px;">Копировать</span>
<span class="t" style="left:88.70px;top:116.69px;font-size:11px;font-weight:400;color:#9a9a9a;-webkit-text-stroke:0.3px #9a9a9a;letter-spacing:0.132px;">Вставить</span>
<span class="t" style="left:158.20px;top:116.69px;font-size:11px;font-weight:400;color:#9a9a9a;-webkit-text-stroke:0.3px #9a9a9a;letter-spacing:0.195px;">Вырезать</span>
<span class="t" style="left:76.00px;top:142.69px;font-size:11px;font-weight:400;color:#5a5a5a;-webkit-text-stroke:0.2px #5a5a5a;letter-spacing:-0.138px;">Буфер обмена</span>
<span class="t" style="left:262.40px;top:75.69px;font-size:11px;font-weight:500;color:#222;-webkit-text-stroke:0.42px #222;letter-spacing:0.079px;">Отменить</span>
<span class="t" style="left:262.40px;top:98.69px;font-size:11px;font-weight:400;color:#9a9a9a;-webkit-text-stroke:0.3px #9a9a9a;letter-spacing:0.155px;">Повторить</span>
<span class="t" style="left:262.70px;top:121.69px;font-size:11px;font-weight:500;color:#222;-webkit-text-stroke:0.42px #222;letter-spacing:0.057px;">Удалить</span>
<span class="t" style="left:246.20px;top:142.69px;font-size:11px;font-weight:400;color:#5a5a5a;-webkit-text-stroke:0.2px #5a5a5a;letter-spacing:0.150px;">Редактирование</span>
<span class="t" style="left:380.10px;top:116.69px;font-size:11px;font-weight:500;color:#222;-webkit-text-stroke:0.42px #222;letter-spacing:0.157px;">Базы</span>
<span class="t" style="left:447.00px;top:116.69px;font-size:11px;font-weight:500;color:#222;-webkit-text-stroke:0.42px #222;letter-spacing:0.159px;">Сметы</span>
<span class="t" style="left:508.60px;top:116.69px;font-size:11px;font-weight:500;color:#222;-webkit-text-stroke:0.42px #222;letter-spacing:0.287px;">Открытые</span>
<span class="t" style="left:424.20px;top:142.69px;font-size:11px;font-weight:400;color:#5a5a5a;-webkit-text-stroke:0.2px #5a5a5a;letter-spacing:0.173px;">Мои документы</span>
<span class="t" style="left:602.80px;top:116.69px;font-size:11px;font-weight:400;color:#9a9a9a;-webkit-text-stroke:0.3px #9a9a9a;letter-spacing:0.029px;">Папка</span>
<span class="t" style="left:673.40px;top:116.69px;font-size:11px;font-weight:400;color:#9a9a9a;-webkit-text-stroke:0.3px #9a9a9a;letter-spacing:-0.019px;">Смета</span>
<span class="t" style="left:633.60px;top:142.69px;font-size:11px;font-weight:400;color:#5a5a5a;-webkit-text-stroke:0.2px #5a5a5a;letter-spacing:0.098px;">Создать</span>
<span class="t" style="left:756.40px;top:116.69px;font-size:11px;font-weight:500;color:#222;-webkit-text-stroke:0.42px #222;letter-spacing:0.283px;">Поиск</span>
<span class="t" style="left:818.30px;top:116.69px;font-size:11px;font-weight:400;color:#9a9a9a;-webkit-text-stroke:0.3px #9a9a9a;letter-spacing:0.170px;">Заменить</span>
<span class="t" style="left:793.40px;top:142.69px;font-size:11px;font-weight:400;color:#5a5a5a;-webkit-text-stroke:0.2px #5a5a5a;letter-spacing:0.263px;">Поиск</span>
<span class="t" style="left:895.60px;top:116.69px;font-size:11px;font-weight:400;color:#9a9a9a;-webkit-text-stroke:0.3px #9a9a9a;letter-spacing:0.260px;">Импорт сметы</span>
<span class="t" style="left:981.30px;top:116.69px;font-size:11px;font-weight:500;color:#222;-webkit-text-stroke:0.42px #222;letter-spacing:0.234px;">Экспорт сметы</span>
<span class="t" style="left:1090.50px;top:116.69px;font-size:11px;font-weight:500;color:#222;-webkit-text-stroke:0.42px #222;letter-spacing:0.245px;">Пакетная выгрузка</span>
<span class="t" style="left:1103.40px;top:127.69px;font-size:11px;font-weight:500;color:#222;-webkit-text-stroke:0.42px #222;letter-spacing:0.239px;">документации</span>
<span class="t" style="left:1008.50px;top:142.69px;font-size:11px;font-weight:400;color:#5a5a5a;-webkit-text-stroke:0.2px #5a5a5a;letter-spacing:0.303px;">Импорт/экспорт</span>
<span class="t" style="left:1230.10px;top:116.69px;font-size:11px;font-weight:500;color:#222;-webkit-text-stroke:0.42px #222;letter-spacing:0.064px;">Справка о</span>
<span class="t" style="left:1227.60px;top:127.69px;font-size:11px;font-weight:500;color:#222;-webkit-text-stroke:0.42px #222;letter-spacing:0.213px;">программе</span>
<span class="t" style="left:1306.40px;top:116.69px;font-size:11px;font-weight:400;color:#9a9a9a;-webkit-text-stroke:0.3px #9a9a9a;letter-spacing:0.086px;">Горячие</span>
<span class="t" style="left:1304.70px;top:127.69px;font-size:11px;font-weight:400;color:#9a9a9a;-webkit-text-stroke:0.3px #9a9a9a;letter-spacing:0.152px;">клавиши</span>
<span class="t" style="left:1271.70px;top:142.69px;font-size:11px;font-weight:400;color:#5a5a5a;-webkit-text-stroke:0.2px #5a5a5a;letter-spacing:0.050px;">Помощь</span>
<span class="t" style="left:1388.80px;top:116.69px;font-size:11px;font-weight:400;color:#9a9a9a;-webkit-text-stroke:0.3px #9a9a9a;letter-spacing:0.111px;">Сменить</span>
<span class="t" style="left:1400.10px;top:127.69px;font-size:11px;font-weight:400;color:#9a9a9a;-webkit-text-stroke:0.3px #9a9a9a;letter-spacing:0.083px;">базу</span>
</div>
</div>
<div id="toasts">
<div class="b" style="left:1476px;top:23px;width:275px;height:82.5px;background:rgba(255,255,255,0.9);border:1px solid #6ab4dc;border-radius:3px;box-sizing:border-box;box-shadow:0 3px 8px rgba(0,0,0,0.18);"></div>
<div class="b" style="left:1476px;top:122px;width:275px;height:65.5px;background:rgba(255,255,255,0.9);border:1px solid #7cc868;border-radius:3px;box-sizing:border-box;box-shadow:0 3px 8px rgba(0,0,0,0.18);"></div>
<div class="b" style="left:1476px;top:204px;width:275px;height:65.5px;background:rgba(255,255,255,0.9);border:1px solid #6ab4dc;border-radius:3px;box-sizing:border-box;box-shadow:0 3px 8px rgba(0,0,0,0.18);"></div>
<span class="t" style="left:1514.00px;top:37.69px;font-size:11px;font-weight:700;color:#4d5a66;transform:scaleX(0.9673);transform-origin:0 0;">Экспорт сметы</span>
<span class="t" style="left:1514.00px;top:62.69px;font-size:11px;font-weight:400;color:#616b73;letter-spacing:0.090px;">Началась операция экспорта сметы</span>
<span class="t" style="left:1514.00px;top:79.69px;font-size:11px;font-weight:400;color:#616b73;letter-spacing:0.078px;">(Новая объектная смета)</span>
<span class="t" style="left:1514.00px;top:136.69px;font-size:11px;font-weight:700;color:#4f6b4a;transform:scaleX(0.9561);transform-origin:0 0;">Экспорт завершен успешно</span>
<span class="t" style="left:1514.00px;top:161.69px;font-size:11px;font-weight:400;color:#5f6e5e;letter-spacing:0.091px;">Новая объектная смета</span>
<span class="t" style="left:1514.00px;top:218.69px;font-size:11px;font-weight:700;color:#4d5a66;transform:scaleX(0.9630);transform-origin:0 0;">Экспорт завершен</span>
<span class="t" style="left:1514.00px;top:243.69px;font-size:11px;font-weight:400;color:#616b73;letter-spacing:0.057px;">Операция экспорта завершена</span>
<svg width="1771" height="1036" viewBox="0 0 1771 1036" style="left:0;top:0"><circle cx="1497" cy="43.7" r="8.5" fill="none" stroke="#68b5de" stroke-width="1.2"/><rect x="1496.2" y="39.300000000000004" width="1.7" height="1.7" fill="#7cc0e3"/><rect x="1496.15" y="42.7" width="1.8" height="6" fill="#7cc0e3"/>
<path d="M1727.2,37.1 L1736.8,46.900000000000006 M1736.8,37.1 L1727.2,46.900000000000006" stroke="#2c2c2c" stroke-width="1.8" fill="none"/>
<path d="M1489,142.8 L1494.3,148.2 L1505.2,137.4" fill="none" stroke="#6cc857" stroke-width="1.4"/>
<path d="M1727.2,136.1 L1736.8,145.9 M1736.8,136.1 L1727.2,145.9" stroke="#2c2c2c" stroke-width="1.8" fill="none"/>
<circle cx="1497" cy="224.7" r="8.5" fill="none" stroke="#68b5de" stroke-width="1.2"/><rect x="1496.2" y="220.29999999999998" width="1.7" height="1.7" fill="#7cc0e3"/><rect x="1496.15" y="223.7" width="1.8" height="6" fill="#7cc0e3"/>
<path d="M1727.2,218.1 L1736.8,227.9 M1736.8,218.1 L1727.2,227.9" stroke="#2c2c2c" stroke-width="1.8" fill="none"/>
<rect x="1470" y="15" width="288.2" height="260.1" fill="none" stroke="#ff0000" stroke-width="3"/></svg>
</div>
</body></html>
